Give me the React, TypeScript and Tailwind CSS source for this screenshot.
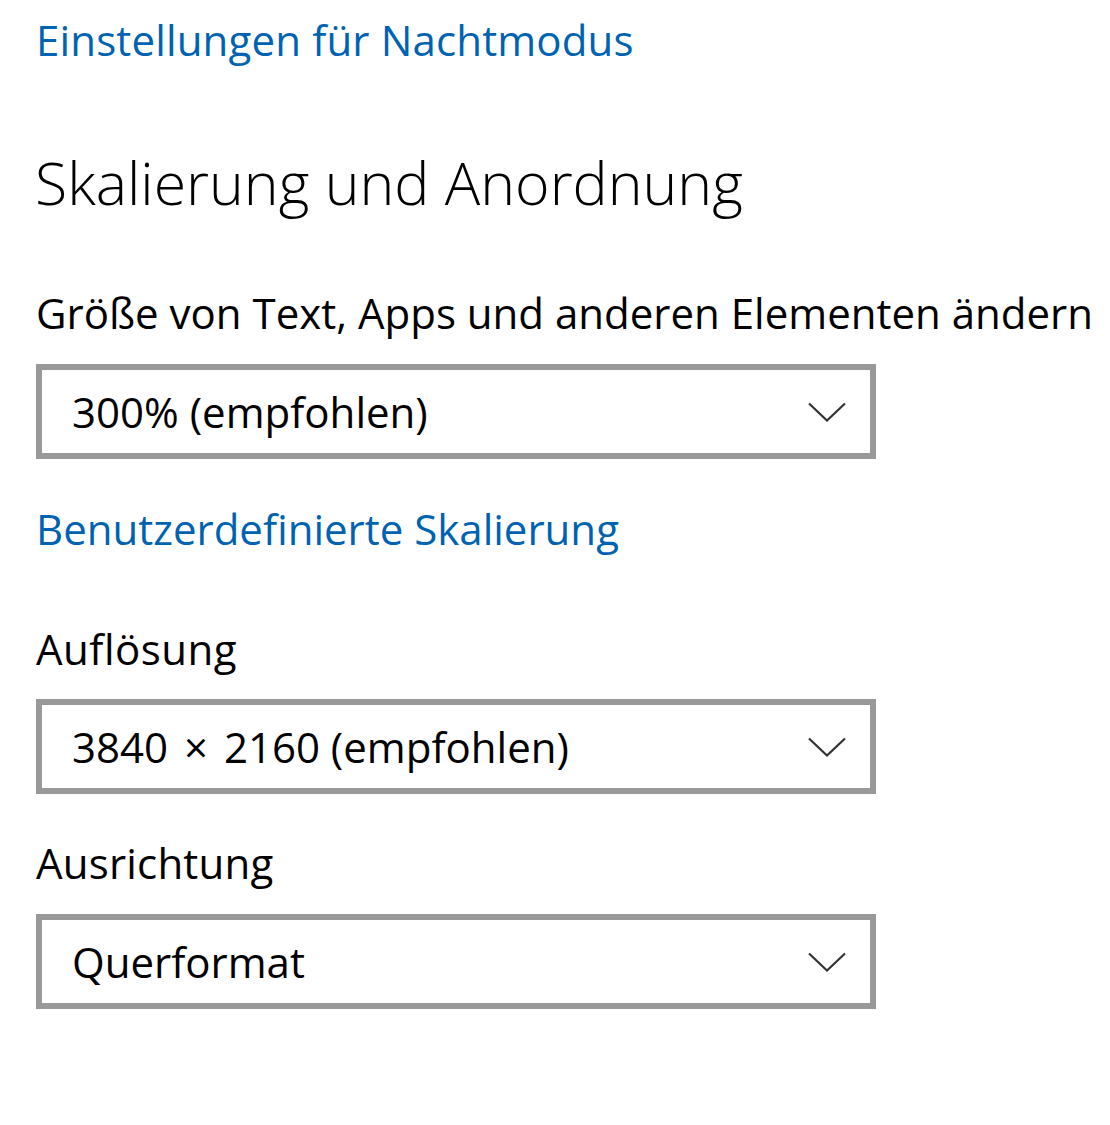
import React from 'react';

const font = { fontFamily: '"Open Sans", "Noto Sans", sans-serif' };

function Chevron() {
  return (
    <svg width="38" height="20" viewBox="0 0 38 20" fill="none" className="shrink-0">
      <polyline points="1,1.5 19,18.5 37,1.5" stroke="#333333" strokeWidth="2.2" />
    </svg>
  );
}

function Select({ children }: { children: React.ReactNode }) {
  return (
    <div className="w-[840px] h-[95px] border-[6px] border-[#999999] bg-white flex items-center justify-between pl-[30px] pr-[24px]">
      <span className="text-[42px] leading-[56px] text-black whitespace-nowrap">{children}</span>
      <Chevron />
    </div>
  );
}

export default function App() {
  return (
    <div
      className="w-[1110px] h-[1125px] bg-white overflow-hidden pl-[36px] pt-[12px] flex flex-col items-start"
      style={font}
    >
      <a className="text-[42px] leading-[56px] tracking-[0.15px] text-[#0063b1] whitespace-nowrap">
        Einstellungen für Nachtmodus
      </a>

      <h2 className="mt-[74px] -ml-[1px] text-[59px] leading-[80px] font-[350] text-black whitespace-nowrap">
        Skalierung und Anordnung
      </h2>

      <div className="mt-[63px] text-[42px] leading-[56px] text-black whitespace-nowrap">
        Größe von Text, Apps und anderen Elementen ändern
      </div>
      <div className="mt-[23px]">
        <Select>300% (empfohlen)</Select>
      </div>

      <a className="mt-[42px] text-[42px] leading-[56px] text-[#0063b1] whitespace-nowrap">
        Benutzerdefinierte Skalierung
      </a>

      <div className="mt-[64px] text-[42px] leading-[56px] tracking-[0.5px] text-black">Auflösung</div>
      <div className="mt-[22px]">
        <Select>
          3840 <span className="px-[5px]">×</span> 2160 (empfohlen)
        </Select>
      </div>

      <div className="mt-[41px] text-[42px] leading-[56px] tracking-[0.2px] text-black">Ausrichtung</div>
      <div className="mt-[23px]">
        <Select>Querformat</Select>
      </div>
    </div>
  );
}
